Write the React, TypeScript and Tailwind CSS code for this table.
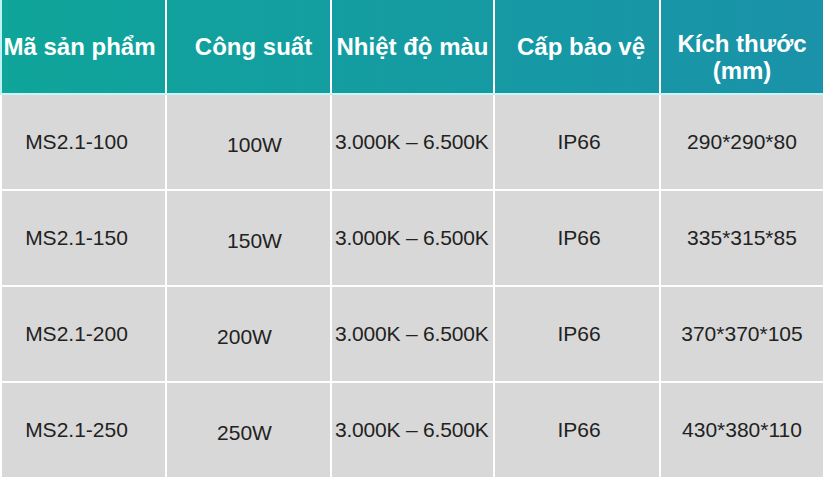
const headers = [
  { label: "Mã sản phẩm", cls: "w-[165px] border-r-[2px] pr-[8px]" },
  { label: "Công suất", cls: "w-[165px] border-r-[2px] pl-[10px]" },
  { label: "Nhiệt độ màu", cls: "w-[163px] border-r-[2px]" },
  { label: "Cấp bảo vệ", cls: "w-[166px] border-r-[2px] pl-[8px]" },
  { label: "Kích thước\n(mm)", cls: "w-[162px] pt-[20px] leading-[27px]" },
];

const rows = [
  { code: "MS2.1-100", power: "100W", powerCls: "pl-[12px] pt-[6px]", size: "290*290*80" },
  { code: "MS2.1-150", power: "150W", powerCls: "pl-[12px] pt-[6px]", size: "335*315*85" },
  { code: "MS2.1-200", power: "200W", powerCls: "pr-[8px] pt-[6px]", size: "370*370*105" },
  { code: "MS2.1-250", power: "250W", powerCls: "pr-[8px] pt-[6px]", size: "430*380*110" },
];

export default function App() {
  return (
    <div className="w-[826px] h-[481px] bg-white overflow-hidden font-['Liberation_Sans',Arial,sans-serif]">
      <div className="w-[823px]">
        {/* header */}
        <div className="flex h-[93px] bg-gradient-to-r from-[#0fa59a] to-[#1a92a9] border-l-[2px] border-[#bff3f3]">
          {headers.map((h, i) => (
            <div
              key={i}
              className={
                "flex items-center justify-center text-center whitespace-pre-line border-white text-white font-bold text-[24px] leading-[26px] " +
                h.cls
              }
            >
              {h.label}
            </div>
          ))}
        </div>
        <div className="h-[2px] bg-[#c8f5f5]" />

        {/* body */}
        <div className="flex flex-col gap-y-[2px] pl-[2px]">
          {rows.map((r) => (
            <div
              key={r.code}
              className="grid grid-cols-[163px_163px_161px_164px_162px] gap-x-[2px] h-[94px] text-[21px] text-[#222]"
            >
              <div className="bg-[#d8d8d8] flex items-center justify-center pr-[14px]">{r.code}</div>
              <div className={"bg-[#d8d8d8] flex items-center justify-center " + r.powerCls}>{r.power}</div>
              <div className="bg-[#d8d8d8] flex items-center pl-[3px] tracking-[-0.2px]">3.000K – 6.500K</div>
              <div className="bg-[#d8d8d8] flex items-center justify-center pl-[4px]">IP66</div>
              <div className="bg-[#d8d8d8] flex items-center justify-center">{r.size}</div>
            </div>
          ))}
        </div>
      </div>
    </div>
  );
}
